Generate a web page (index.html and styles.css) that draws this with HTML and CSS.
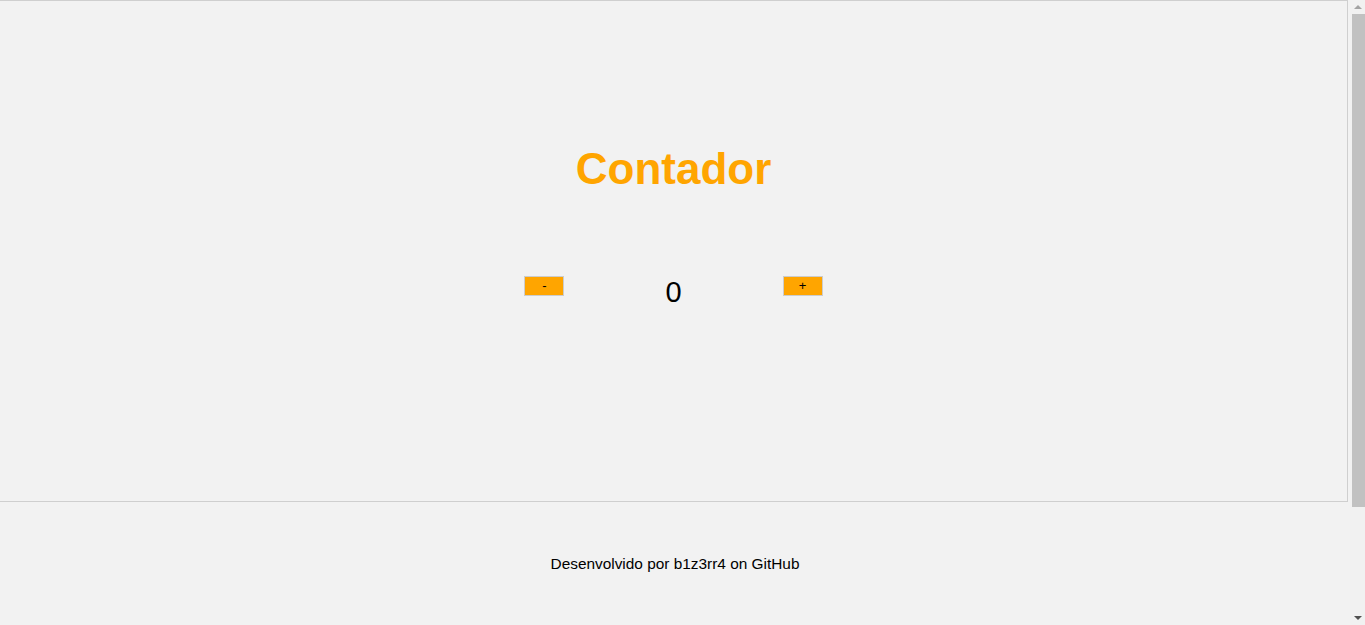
FILE: index.html
```html
<!DOCTYPE html>
<html lang="pt-BR">
<head>
<meta charset="utf-8">
<title>Contador</title>
<link rel="stylesheet" href="styles.css">
</head>
<body>
<main class="counter-box">
  <h1 class="title">Contador</h1>
  <div class="controls">
    <button class="btn" type="button">-</button>
    <span class="value">0</span>
    <button class="btn" type="button">+</button>
  </div>
</main>
<footer class="footer">
  <p class="credit">Desenvolvido por b1z3rr4 on GitHub</p>
</footer>
<div class="fake-scrollbar" aria-hidden="true">
  <span class="arrow arrow-up"></span>
  <span class="thumb"></span>
  <span class="arrow arrow-down"></span>
</div>
</body>
</html>
```
FILE: styles.css
```css
html, body {
  margin: 0;
  padding: 0;
  background: #f2f2f2;
  font-family: "Liberation Sans", Arial, sans-serif;
}

body {
  margin-right: 15px;
}

.counter-box {
  box-sizing: border-box;
  height: 502px;
  margin-right: 2px;
  border: 1px solid #cfcfcf;
  border-left: none;
  padding-top: 142px;
  display: flex;
  flex-direction: column;
  align-items: center;
}

.title {
  margin: 0;
  font-size: 44px;
  font-weight: bold;
  color: #ffa500;
  line-height: 51px;
}

.controls {
  margin-top: 82px;
  display: flex;
  align-items: flex-start;
  gap: 101px;
}

.btn {
  box-sizing: border-box;
  width: 40px;
  height: 20px;
  padding: 0;
  background: #ffa500;
  border: 1px solid #cccccc;
  color: #000;
  font-family: "Liberation Sans", Arial, sans-serif;
  font-size: 13px;
  line-height: 18px;
}

.value {
  font-size: 29px;
  line-height: 33px;
  color: #000;
}

.footer {
  height: 255px;
  padding-top: 53px;
  box-sizing: border-box;
  text-align: center;
}

.credit {
  margin: 0;
  font-size: 15.4px;
  line-height: 18px;
  color: #000;
}

/* browser scrollbar look-alike, overlaid on the right edge */
.fake-scrollbar {
  position: fixed;
  top: 0;
  right: 0;
  width: 15px;
  height: 100vh;
  background: #f1f1f1;
  display: flex;
  flex-direction: column;
  align-items: center;
}

.arrow {
  width: 0;
  height: 0;
  border-left: 4px solid transparent;
  border-right: 4px solid transparent;
}

.arrow-up {
  margin: 5px 0 5px;
  border-bottom: 4px solid #a3a3a3;
}

.arrow-down {
  margin: 5px 0 5px;
  border-top: 4px solid #505050;
}

.thumb {
  width: 13px;
  flex: 1;
  background: #c1c1c1;
  margin-left: 1px;
  margin-bottom: 104px;
}
```
